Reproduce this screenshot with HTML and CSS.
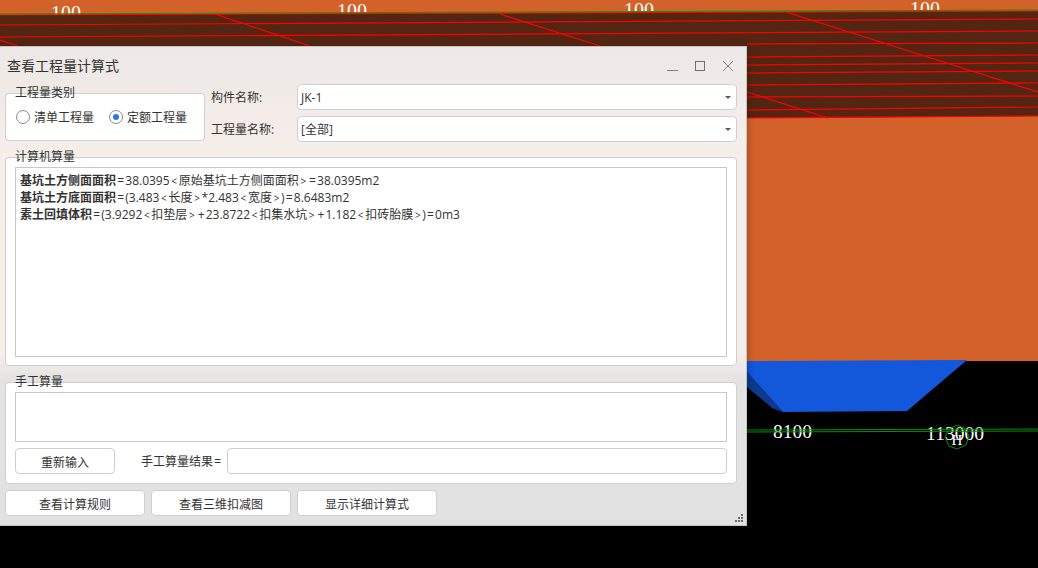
FILE: index.html
```html
<!DOCTYPE html>
<html lang="en">
<head>
  <meta charset="utf-8">
  <title>查看工程量计算式</title>
  <link rel="stylesheet" href="styles.css">
</head>
<body>
  <div class="stage">
    <!-- CAD viewport behind the dialog -->
    <svg class="viewport" width="1038" height="568" viewBox="0 0 1038 568">
      <rect x="0" y="0" width="1038" height="568" fill="#000"/>
      <rect x="0" y="0" width="1038" height="361" fill="#d2622a"/>
      <g class="cad-text">
        <text x="66" y="20" font-size="20">100</text>
        <text x="352" y="18" font-size="20">100</text>
        <text x="639" y="17" font-size="20">100</text>
        <text x="925" y="16" font-size="20">100</text>
      </g>
      <polygon points="0,15 1038,11 1038,116 747,118 0,118" fill="#522612"/>
      <g stroke="#f00" stroke-width="1.2" fill="none">
        <line x1="0" y1="15" x2="1038" y2="11"/>
        <line x1="0" y1="25" x2="1038" y2="19"/>
        <line x1="0" y1="37" x2="1038" y2="31"/>
        <line x1="747" y1="44" x2="1038" y2="43"/>
        <line x1="747" y1="57" x2="1038" y2="55"/>
        <line x1="747" y1="65" x2="1038" y2="63"/>
        <line x1="747" y1="73" x2="1038" y2="71"/>
        <line x1="747" y1="85" x2="1038" y2="83"/>
        <line x1="747" y1="97" x2="1038" y2="96"/>
        <line x1="747" y1="110" x2="1038" y2="107"/>
        <line x1="747" y1="118" x2="1038" y2="116"/>
        <line x1="0" y1="40" x2="18" y2="46"/>
        <line x1="215" y1="14" x2="310" y2="46"/>
        <line x1="500" y1="14" x2="600" y2="46"/>
        <line x1="747" y1="92" x2="828" y2="118"/>
        <line x1="786" y1="12" x2="1038" y2="92"/>
      </g>
      <line x1="0" y1="14" x2="1038" y2="10" stroke="#2f8a12" stroke-width="1.2"/>
      <polygon points="747,372 783,412 772,408 747,387" fill="#0d3a8e"/>
      <polygon points="747,361 967,360 907,411 783,412 747,372" fill="#1357db"/>
      <g class="cad-text">
        <text x="792.5" y="438" font-size="19.5">8100</text>
        <text x="955" y="440" font-size="19.5">113000</text>
        <text x="957" y="445" font-size="15">H</text>
      </g>
      <g stroke="#0f8a0f" stroke-width="1" fill="none">
        <line x1="747" y1="430" x2="1038" y2="429"/>
        <line x1="747" y1="432" x2="1038" y2="431"/>
        <polygon points="957,425 964,428 969,436 966,445 957,449 949,446 945,437 949,429"/>
      </g>
    </svg>

    <div class="window">
      <div class="titlebar">
        <span class="title">查看工程量计算式</span>
        <div class="win-buttons">
          <svg width="12" height="12" viewBox="0 0 12 12"><line x1="1" y1="10.5" x2="12" y2="10.5" stroke="#808080"/></svg>
          <svg width="12" height="12" viewBox="0 0 12 12"><rect x="1.5" y="1.5" width="9" height="9" fill="none" stroke="#707070"/></svg>
          <svg width="12" height="12" viewBox="0 0 12 12"><path d="M1 1 L11 11 M11 1 L1 11" stroke="#8a8a8a" fill="none"/></svg>
        </div>
      </div>

      <div class="top-row">
        <div class="group type-group">
          <span class="legend">工程量类别</span>
          <label class="radio"><span class="radio-mark"></span>清单工程量</label>
          <label class="radio"><span class="radio-mark checked"></span>定额工程量</label>
        </div>
        <div class="fields">
          <div class="field">
            <span class="field-label">构件名称:</span>
            <div class="select">JK-1<span class="arrow"></span></div>
          </div>
          <div class="field">
            <span class="field-label">工程量名称:</span>
            <div class="select">[全部]<span class="arrow"></span></div>
          </div>
        </div>
      </div>

      <div class="group auto-group">
        <span class="legend">计算机算量</span>
        <div class="textbox result-text">
          <div class="result-line"><b>基坑土方侧面面积</b><i class="eq">=</i>38.0395<i class="ang">&lt;</i>原始基坑土方侧面面积<i class="ang">&gt;</i><i class="eq">=</i>38.0395m2</div>
          <div class="result-line"><b>基坑土方底面面积</b><i class="eq">=</i>(3.483<i class="ang">&lt;</i>长度<i class="ang">&gt;</i>*2.483<i class="ang">&lt;</i>宽度<i class="ang">&gt;</i>)<i class="eq">=</i>8.6483m2</div>
          <div class="result-line"><b>素土回填体积</b><i class="eq">=</i>(3.9292<i class="ang">&lt;</i>扣垫层<i class="ang">&gt;</i><i class="eq">+</i>23.8722<i class="ang">&lt;</i>扣集水坑<i class="ang">&gt;</i><i class="eq">+</i>1.182<i class="ang">&lt;</i>扣砖胎膜<i class="ang">&gt;</i>)<i class="eq">=</i>0m3</div>
        </div>
      </div>

      <div class="group manual-group">
        <span class="legend">手工算量</span>
        <div class="textbox manual-text"></div>
        <div class="manual-row">
          <button class="btn btn-retry">重新输入</button>
          <span class="manual-label">手工算量结果<i class="eq">=</i></span>
          <div class="manual-input"></div>
        </div>
      </div>

      <div class="actions">
        <button class="btn btn-action">查看计算规则</button>
        <button class="btn btn-action">查看三维扣减图</button>
        <button class="btn btn-action">显示详细计算式</button>
      </div>

      <svg class="grip" width="9" height="9" viewBox="0 0 9 9" fill="#6a6a6a">
        <rect x="6" y="0" width="2" height="2"/>
        <rect x="3" y="3" width="2" height="2"/>
        <rect x="6" y="3" width="2" height="2"/>
        <rect x="0" y="6" width="2" height="2"/>
        <rect x="3" y="6" width="2" height="2"/>
        <rect x="6" y="6" width="2" height="2"/>
      </svg>
    </div>
  </div>
</body>
</html>
```

FILE: styles.css
```css
* {
  box-sizing: border-box;
}

body {
  margin: 0;
  background: #000;
  overflow: hidden;
  font-family: "Open Sans", "Noto Sans CJK SC", sans-serif;
  font-size: 12px;
  color: #333;
}

.stage {
  position: relative;
  width: 1038px;
  height: 568px;
  overflow: hidden;
}

.viewport {
  position: absolute;
  left: 0;
  top: 0;
}

.cad-text {
  fill: #fff;
  font-family: "Liberation Serif", serif;
  text-anchor: middle;
}

.window {
  position: absolute;
  left: 0;
  top: 46px;
  width: 747px;
  height: 480px;
  display: flex;
  flex-direction: column;
  padding: 0 9px 0 5px;
  background: linear-gradient(to bottom, #ede8e6 0%, #f6eee9 22%, #f6eee9 64%, #e3e3e3 70%, #e2e2e2 100%);
  border: 1px solid #c4c4c4;
  border-left: none;
  box-shadow: 3px 0 5px rgba(0, 0, 0, 0.15);
}

.titlebar {
  height: 37px;
  flex: none;
  display: flex;
  align-items: center;
  justify-content: space-between;
  padding-left: 2px;
}

.title {
  font-size: 14px;
  line-height: 37px;
}

.win-buttons {
  display: flex;
  gap: 16px;
  margin-right: 3px;
}

.group {
  position: relative;
  background: #fff;
  border: 1px solid #cfcfcf;
  border-radius: 4px;
}

.legend {
  position: absolute;
  left: 9px;
  top: -9px;
  line-height: 16px;
}

.top-row {
  display: flex;
  flex: none;
  height: 58px;
}

.type-group {
  width: 200px;
  height: 48px;
  margin-top: 9px;
  display: flex;
  align-items: center;
  padding-left: 10px;
  gap: 15px;
}

.radio {
  display: flex;
  align-items: center;
  gap: 4px;
}

.radio-mark {
  width: 14px;
  height: 14px;
  border: 1px solid #8a8a8a;
  border-radius: 50%;
  background: #fff;
  display: flex;
  align-items: center;
  justify-content: center;
}

.radio-mark.checked::after {
  content: "";
  width: 6px;
  height: 6px;
  border-radius: 50%;
  background: #2a78e4;
}

.fields {
  flex: 1;
  margin-left: 6px;
  display: flex;
  flex-direction: column;
  gap: 6px;
}

.field {
  display: flex;
  align-items: center;
  height: 26px;
}

.field-label {
  width: 86px;
  flex: none;
}

.select {
  position: relative;
  flex: 1;
  height: 26px;
  line-height: 26px;
  padding-left: 3px;
  background: #fff;
  border: 1px solid #cfcfcf;
  border-radius: 4px;
}

.arrow {
  position: absolute;
  right: 5px;
  top: 11px;
  border-left: 3px solid transparent;
  border-right: 3px solid transparent;
  border-top: 3px solid #555866;
}

.auto-group {
  flex: none;
  height: 209px;
  margin-top: 15px;
  padding: 9px;
}

.textbox {
  background: #fff;
  border: 1px solid #c8c8c8;
}

.result-text {
  height: 190px;
  padding: 4px 4px;
}

.result-line {
  height: 17px;
  line-height: 17px;
}

/* = and + sit wide, angle brackets are small with air round them */
.eq {
  font-style: normal;
  margin: 0 1.2px;
}

.ang {
  font-style: normal;
  font-size: 10px;
  margin: 0 1.7px;
}

.manual-group {
  flex: none;
  height: 102px;
  margin-top: 16px;
  padding: 9px;
}

.manual-text {
  height: 50px;
}

.manual-row {
  display: flex;
  align-items: center;
  margin-top: 6px;
}

.manual-label {
  width: 86px;
  margin-left: 26px;
  flex: none;
}

.manual-input {
  flex: 1;
  height: 26px;
  background: #fff;
  border: 1px solid #cfcfcf;
  border-radius: 4px;
}

.btn {
  height: 26px;
  padding: 1px 0 0;
  background: #fff;
  border: 1px solid #cfcfcf;
  border-radius: 4px;
  font-family: inherit;
  font-size: 12px;
  color: #333;
}

.btn-retry {
  width: 100px;
  flex: none;
}

.actions {
  display: flex;
  gap: 6px;
  margin-top: 6px;
}

.btn-action {
  width: 140px;
}

.grip {
  position: absolute;
  right: 2px;
  bottom: 2px;
}
```
